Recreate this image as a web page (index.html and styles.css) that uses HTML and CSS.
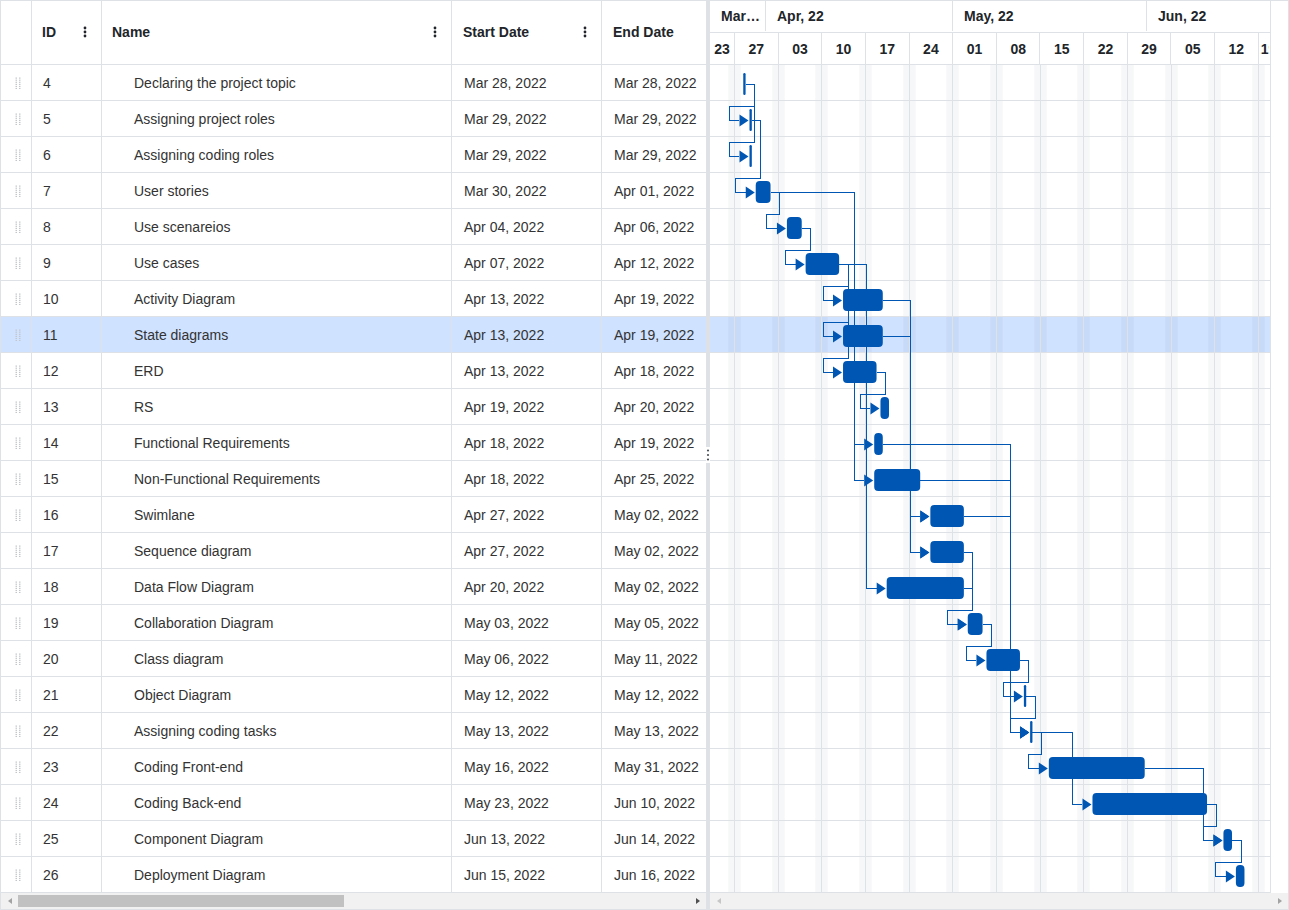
FILE: index.html
```html
<!DOCTYPE html>
<html lang="en">
<head>
<meta charset="utf-8">
<title>Project schedule – Gantt</title>
<link rel="stylesheet" href="styles.css">
</head>
<body>
<svg class="defs" width="0" height="0" aria-hidden="true">
  <symbol id="grip" viewBox="0 0 6 12">
    <rect x="0.5" y="0.5" width="1.5" height="1.2"/><rect x="4" y="0.5" width="1.5" height="1.2"/>
    <rect x="0.5" y="2.6" width="1.5" height="1.2"/><rect x="4" y="2.6" width="1.5" height="1.2"/>
    <rect x="0.5" y="4.7" width="1.5" height="1.2"/><rect x="4" y="4.7" width="1.5" height="1.2"/>
    <rect x="0.5" y="6.8" width="1.5" height="1.2"/><rect x="4" y="6.8" width="1.5" height="1.2"/>
    <rect x="0.5" y="8.9" width="1.5" height="1.2"/><rect x="4" y="8.9" width="1.5" height="1.2"/>
    <rect x="0.5" y="11" width="1.5" height="1"/><rect x="4" y="11" width="1.5" height="1"/>
  </symbol>
  <symbol id="kebab" viewBox="0 0 4 12">
    <circle cx="2" cy="2" r="1.4"/><circle cx="2" cy="6" r="1.4"/><circle cx="2" cy="10" r="1.4"/>
  </symbol>
</svg>

<div class="gantt">
  <section class="grid-pane">
    <div class="grid-header">
      <div class="hcell c-drag"></div>
      <div class="hcell c-id"><span>ID</span><svg class="kebab" width="4" height="12"><use href="#kebab"/></svg></div>
      <div class="hcell c-name"><span>Name</span><svg class="kebab" width="4" height="12"><use href="#kebab"/></svg></div>
      <div class="hcell c-start"><span>Start Date</span><svg class="kebab" width="4" height="12"><use href="#kebab"/></svg></div>
      <div class="hcell c-end"><span>End Date</span></div>
    </div>
    <div class="grid-body">
      <div class="row"><div class="cell c-drag"><svg class="grip" width="6" height="12"><use href="#grip"/></svg></div><div class="cell c-id">4</div><div class="cell c-name">Declaring the project topic</div><div class="cell c-start">Mar 28, 2022</div><div class="cell c-end">Mar 28, 2022</div></div>
      <div class="row"><div class="cell c-drag"><svg class="grip" width="6" height="12"><use href="#grip"/></svg></div><div class="cell c-id">5</div><div class="cell c-name">Assigning project roles</div><div class="cell c-start">Mar 29, 2022</div><div class="cell c-end">Mar 29, 2022</div></div>
      <div class="row"><div class="cell c-drag"><svg class="grip" width="6" height="12"><use href="#grip"/></svg></div><div class="cell c-id">6</div><div class="cell c-name">Assigning coding roles</div><div class="cell c-start">Mar 29, 2022</div><div class="cell c-end">Mar 29, 2022</div></div>
      <div class="row"><div class="cell c-drag"><svg class="grip" width="6" height="12"><use href="#grip"/></svg></div><div class="cell c-id">7</div><div class="cell c-name">User stories</div><div class="cell c-start">Mar 30, 2022</div><div class="cell c-end">Apr 01, 2022</div></div>
      <div class="row"><div class="cell c-drag"><svg class="grip" width="6" height="12"><use href="#grip"/></svg></div><div class="cell c-id">8</div><div class="cell c-name">Use scenareios</div><div class="cell c-start">Apr 04, 2022</div><div class="cell c-end">Apr 06, 2022</div></div>
      <div class="row"><div class="cell c-drag"><svg class="grip" width="6" height="12"><use href="#grip"/></svg></div><div class="cell c-id">9</div><div class="cell c-name">Use cases</div><div class="cell c-start">Apr 07, 2022</div><div class="cell c-end">Apr 12, 2022</div></div>
      <div class="row"><div class="cell c-drag"><svg class="grip" width="6" height="12"><use href="#grip"/></svg></div><div class="cell c-id">10</div><div class="cell c-name">Activity Diagram</div><div class="cell c-start">Apr 13, 2022</div><div class="cell c-end">Apr 19, 2022</div></div>
      <div class="row selected"><div class="cell c-drag"><svg class="grip" width="6" height="12"><use href="#grip"/></svg></div><div class="cell c-id">11</div><div class="cell c-name">State diagrams</div><div class="cell c-start">Apr 13, 2022</div><div class="cell c-end">Apr 19, 2022</div></div>
      <div class="row"><div class="cell c-drag"><svg class="grip" width="6" height="12"><use href="#grip"/></svg></div><div class="cell c-id">12</div><div class="cell c-name">ERD</div><div class="cell c-start">Apr 13, 2022</div><div class="cell c-end">Apr 18, 2022</div></div>
      <div class="row"><div class="cell c-drag"><svg class="grip" width="6" height="12"><use href="#grip"/></svg></div><div class="cell c-id">13</div><div class="cell c-name">RS</div><div class="cell c-start">Apr 19, 2022</div><div class="cell c-end">Apr 20, 2022</div></div>
      <div class="row"><div class="cell c-drag"><svg class="grip" width="6" height="12"><use href="#grip"/></svg></div><div class="cell c-id">14</div><div class="cell c-name">Functional Requirements</div><div class="cell c-start">Apr 18, 2022</div><div class="cell c-end">Apr 19, 2022</div></div>
      <div class="row"><div class="cell c-drag"><svg class="grip" width="6" height="12"><use href="#grip"/></svg></div><div class="cell c-id">15</div><div class="cell c-name">Non-Functional Requirements</div><div class="cell c-start">Apr 18, 2022</div><div class="cell c-end">Apr 25, 2022</div></div>
      <div class="row"><div class="cell c-drag"><svg class="grip" width="6" height="12"><use href="#grip"/></svg></div><div class="cell c-id">16</div><div class="cell c-name">Swimlane</div><div class="cell c-start">Apr 27, 2022</div><div class="cell c-end">May 02, 2022</div></div>
      <div class="row"><div class="cell c-drag"><svg class="grip" width="6" height="12"><use href="#grip"/></svg></div><div class="cell c-id">17</div><div class="cell c-name">Sequence diagram</div><div class="cell c-start">Apr 27, 2022</div><div class="cell c-end">May 02, 2022</div></div>
      <div class="row"><div class="cell c-drag"><svg class="grip" width="6" height="12"><use href="#grip"/></svg></div><div class="cell c-id">18</div><div class="cell c-name">Data Flow Diagram</div><div class="cell c-start">Apr 20, 2022</div><div class="cell c-end">May 02, 2022</div></div>
      <div class="row"><div class="cell c-drag"><svg class="grip" width="6" height="12"><use href="#grip"/></svg></div><div class="cell c-id">19</div><div class="cell c-name">Collaboration Diagram</div><div class="cell c-start">May 03, 2022</div><div class="cell c-end">May 05, 2022</div></div>
      <div class="row"><div class="cell c-drag"><svg class="grip" width="6" height="12"><use href="#grip"/></svg></div><div class="cell c-id">20</div><div class="cell c-name">Class diagram</div><div class="cell c-start">May 06, 2022</div><div class="cell c-end">May 11, 2022</div></div>
      <div class="row"><div class="cell c-drag"><svg class="grip" width="6" height="12"><use href="#grip"/></svg></div><div class="cell c-id">21</div><div class="cell c-name">Object Diagram</div><div class="cell c-start">May 12, 2022</div><div class="cell c-end">May 12, 2022</div></div>
      <div class="row"><div class="cell c-drag"><svg class="grip" width="6" height="12"><use href="#grip"/></svg></div><div class="cell c-id">22</div><div class="cell c-name">Assigning coding tasks</div><div class="cell c-start">May 13, 2022</div><div class="cell c-end">May 13, 2022</div></div>
      <div class="row"><div class="cell c-drag"><svg class="grip" width="6" height="12"><use href="#grip"/></svg></div><div class="cell c-id">23</div><div class="cell c-name">Coding Front-end</div><div class="cell c-start">May 16, 2022</div><div class="cell c-end">May 31, 2022</div></div>
      <div class="row"><div class="cell c-drag"><svg class="grip" width="6" height="12"><use href="#grip"/></svg></div><div class="cell c-id">24</div><div class="cell c-name">Coding Back-end</div><div class="cell c-start">May 23, 2022</div><div class="cell c-end">Jun 10, 2022</div></div>
      <div class="row"><div class="cell c-drag"><svg class="grip" width="6" height="12"><use href="#grip"/></svg></div><div class="cell c-id">25</div><div class="cell c-name">Component Diagram</div><div class="cell c-start">Jun 13, 2022</div><div class="cell c-end">Jun 14, 2022</div></div>
      <div class="row"><div class="cell c-drag"><svg class="grip" width="6" height="12"><use href="#grip"/></svg></div><div class="cell c-id">26</div><div class="cell c-name">Deployment Diagram</div><div class="cell c-start">Jun 15, 2022</div><div class="cell c-end">Jun 16, 2022</div></div>
    </div>
    <div class="hscroll">
      <div class="sb-btn"><span class="tri-left"></span></div>
      <div class="sb-track"><div class="sb-thumb"></div></div>
      <div class="sb-btn"><span class="tri-right dark"></span></div>
    </div>
  </section>

  <div class="splitter">
    <div class="split-handle"><svg width="4" height="16" viewBox="0 0 4 16"><circle cx="2" cy="3.5" r="1.1"/><circle cx="2" cy="8" r="1.1"/><circle cx="2" cy="12.5" r="1.1"/></svg></div>
  </div>

  <section class="chart-pane">
    <div class="timeline">
      <div class="tiers">
        <div class="tier top">
          <div class="tcell w-mar">Mar…</div>
          <div class="tcell w-apr">Apr, 22</div>
          <div class="tcell w-may">May, 22</div>
          <div class="tcell last">Jun, 22</div>
        </div>
        <div class="tier">
          <div class="wcell first">23</div>
          <div class="wcell">27</div>
          <div class="wcell">03</div>
          <div class="wcell">10</div>
          <div class="wcell">17</div>
          <div class="wcell">24</div>
          <div class="wcell">01</div>
          <div class="wcell">08</div>
          <div class="wcell">15</div>
          <div class="wcell">22</div>
          <div class="wcell">29</div>
          <div class="wcell">05</div>
          <div class="wcell">12</div>
          <div class="wcell last"><span class="clip">19</span></div>
        </div>
      </div>
      <div class="gutter"></div>
    </div>
    <div class="chart-body">
      <div class="chart-canvas"><svg id="chart" class="chart-svg" width="560" height="828"></svg></div>
      <div class="gutter"></div>
    </div>
    <div class="hscroll">
      <div class="sb-btn"><span class="tri-left light"></span></div>
      <div class="sb-track"></div>
      <div class="sb-btn"><span class="tri-right"></span></div>
    </div>
  </section>
</div>
<script src="script.js"></script>
</body>
</html>
```

FILE: styles.css
```css
* { box-sizing: border-box; }
html, body { margin: 0; padding: 0; background: #fff; }
body {
  font-family: "Liberation Sans", Arial, sans-serif;
  font-size: 14px;
  color: #333;
}
.defs { display: block; width: 0; height: 0; overflow: hidden; }

.gantt {
  display: flex;
  width: 1289px;
  height: 910px;
  border: 1px solid #dee2e6;
  overflow: hidden;
}

/* ---------- left grid ---------- */
.grid-pane {
  width: 705px;
  flex: none;
  display: flex;
  flex-direction: column;
  overflow: hidden;
}
.grid-header {
  height: 64px;
  flex: none;
  display: flex;
  border-bottom: 1px solid #dee2e6;
}
.hcell {
  flex: none;
  display: flex;
  align-items: center;
  justify-content: space-between;
  padding: 0 14px 1px 10px;
  border-right: 1px solid #dee2e6;
  font-weight: 700;
  color: #212529;
  white-space: nowrap;
}
.hcell.c-start, .hcell.c-end { padding-left: 11px; }
.kebab { display: block; fill: #212529; }
.c-drag { width: 31px; }
.c-id { width: 70px; }
.c-name { width: 350px; }
.c-start { width: 150px; }
.c-end { width: 150px; border-right: none; }
.hcell.c-drag { padding: 0; }

.grid-body { height: 828px; flex: none; }
.row {
  display: flex;
  height: 36px;
  border-bottom: 1px solid #dee2e6;
}
.row.selected { background: #cfe2ff; }
.cell {
  flex: none;
  display: flex;
  align-items: center;
  padding: 1px 12px 0;
  border-right: 1px solid #dee2e6;
  white-space: nowrap;
  overflow: hidden;
}
.cell.c-id { padding-left: 11px; }
.cell.c-name { padding-left: 32px; }
.cell.c-drag { padding: 1px 0 0 14px; }
.cell.c-end { border-right: none; }
.grip { display: block; fill: #c3c7cc; }

/* ---------- scrollbars ---------- */
.hscroll {
  height: 16px;
  flex: none;
  display: flex;
  background: #f1f1f1;
}
.sb-btn {
  width: 17px;
  flex: none;
  display: flex;
  align-items: center;
  justify-content: center;
}
.sb-track { flex: 1; padding: 2px 0; }
.sb-thumb { width: 326px; height: 100%; background: #c1c1c1; }
.tri-left, .tri-right {
  width: 0;
  height: 0;
  border-top: 3.5px solid transparent;
  border-bottom: 3.5px solid transparent;
}
.tri-left { border-right: 4px solid #a3a3a3; }
.tri-right { border-left: 4px solid #a3a3a3; }
.tri-left.light { border-right-color: #c6c6c6; }
.tri-right.dark { border-left-color: #505050; }

/* ---------- splitter ---------- */
.splitter {
  width: 4px;
  flex: none;
  background: #dee2e6;
  display: flex;
  align-items: center;
  justify-content: center;
}
.split-handle { width: 4px; height: 16px; background: #fff; }
.split-handle svg { display: block; fill: #495057; }

/* ---------- chart ---------- */
.chart-pane {
  flex: 1;
  min-width: 0;
  display: flex;
  flex-direction: column;
}
.timeline { height: 64px; flex: none; display: flex; }
.tiers {
  width: 561px;
  flex: none;
  display: flex;
  flex-direction: column;
  border-right: 1px solid #dee2e6;
  overflow: hidden;
}
.tier {
  height: 32px;
  display: flex;
  border-bottom: 1px solid #dee2e6;
  font-weight: 700;
  color: #212529;
}
.tier.top { padding-bottom: 1px; }
.tcell {
  flex: none;
  display: flex;
  align-items: center;
  padding-left: 11px;
  border-right: 1px solid #dee2e6;
  white-space: nowrap;
  overflow: hidden;
}
.w-mar { width: 56px; }
.w-apr { width: 187px; }
.w-may { width: 194px; }
.tcell.last { flex: 1; border-right: none; }
.wcell {
  flex: none;
  width: 43.65px;
  display: flex;
  align-items: center;
  justify-content: center;
  border-right: 1px solid #dee2e6;
  white-space: nowrap;
  overflow: hidden;
}
.wcell.first { width: 25px; }
.wcell.last { flex: 1; width: auto; justify-content: flex-start; padding-left: 2px; border-right: none; }
.wcell .clip { display: block; width: 8px; overflow: hidden; }
.gutter { width: 17px; flex: none; }

.chart-body { height: 828px; flex: none; display: flex; }
.chart-canvas { width: 561px; flex: none; border-right: 1px solid #dee2e6; }
.chart-svg { display: block; }
.chart-svg .sel { fill: #cfe2ff; }
.chart-svg .wkend { fill: rgba(0, 20, 60, 0.035); }
.chart-svg .gline { stroke: #dee2e6; stroke-width: 1; fill: none; shape-rendering: crispEdges; }
.chart-svg .conn { stroke: #0056b3; stroke-width: 1; fill: none; shape-rendering: crispEdges; }
.chart-svg .arrow { fill: #0056b3; }
.chart-svg .bar { fill: #0056b3; }
```

FILE: script.js
```js
(function () {
  var D = 6.236;      /* px per day, Mar 23 2022 = day 0 */
  var ROW = 36;
  var W = 560;
  /* [id, startDay, endDay] */
  var tasks = [
    [4, 5, 5], [5, 6, 6], [6, 6, 6], [7, 7, 9], [8, 12, 14], [9, 15, 20],
    [10, 21, 27], [11, 21, 27], [12, 21, 26], [13, 27, 28], [14, 26, 27],
    [15, 26, 33], [16, 35, 40], [17, 35, 40], [18, 28, 40], [19, 41, 43],
    [20, 44, 49], [21, 50, 50], [22, 51, 51], [23, 54, 69], [24, 61, 79],
    [25, 82, 83], [26, 84, 85]
  ];
  var deps = [
    [4, 5], [4, 6], [5, 7], [7, 8], [7, 14], [7, 15], [8, 9], [9, 10], [9, 11],
    [9, 12], [9, 18], [10, 16], [10, 17], [11, 16], [11, 17], [12, 13],
    [14, 22], [15, 22], [16, 22], [17, 19], [18, 19], [19, 20], [20, 21],
    [21, 22], [22, 23], [22, 24], [23, 25], [24, 25], [25, 26]
  ];
  var selected = 7;
  var H = tasks.length * ROW;
  var svg = document.getElementById('chart');
  if (!svg) return;
  svg.setAttribute('width', W);
  svg.setAttribute('height', H);
  svg.setAttribute('viewBox', '0 0 ' + W + ' ' + H);

  var idx = {};
  tasks.forEach(function (t, i) { idx[t[0]] = i; });
  function sx(t) { return (t[1] + 8 / 24) * D; }
  function ex(t) { return (t[2] + 17 / 24) * D; }
  function px(v) { return Math.floor(v) + 0.5; }
  function f(v) { return Math.round(v * 100) / 100; }

  var s = '';
  s += '<rect class="sel" x="0" y="' + (selected * ROW) + '" width="' + W + '" height="' + (ROW - 1) + '"/>';

  var weeks = [];
  for (var k = 0; k < 13; k++) weeks.push(Math.round(24 + 43.652 * k) + 0.5);
  weeks.forEach(function (w) {
    s += '<rect class="wkend" x="' + f(w - 6.236) + '" y="0" width="12.47" height="' + H + '"/>';
  });
  for (var r = 1; r <= tasks.length; r++) {
    s += '<path class="gline" d="M0 ' + (r * ROW - 0.5) + 'H' + W + '"/>';
  }
  weeks.forEach(function (w) {
    s += '<path class="gline" d="M' + w + ' 0V' + H + '"/>';
  });

  var arrows = '';
  deps.forEach(function (dp) {
    var ia = idx[dp[0]], ib = idx[dp[1]];
    var A = tasks[ia], B = tasks[ib];
    var x1 = f(ex(A));
    var y1 = ia * ROW + 19.5;
    var xs = sx(B);
    var y2 = ib * ROW + 19.5;
    var tip = f(xs - 1), base = f(xs - 10);
    var vx = px(xs - 20);
    var d;
    if (xs - ex(A) < 30) {
      var jx = px(ex(A) + 9);
      var jy = ib * ROW + 5.5;
      d = 'M' + x1 + ' ' + y1 + 'H' + jx + 'V' + jy + 'H' + vx + 'V' + y2 + 'H' + base;
    } else {
      d = 'M' + x1 + ' ' + y1 + 'H' + vx + 'V' + y2 + 'H' + base;
    }
    s += '<path class="conn" d="' + d + '"/>';
    arrows += '<polygon class="arrow" points="' + base + ',' + (y2 - 6) + ' ' + tip + ',' + y2 + ' ' + base + ',' + (y2 + 6) + '"/>';
  });
  s += arrows;

  tasks.forEach(function (t, i) {
    var x = sx(t), w = ex(t) - x;
    var rx = Math.min(4, w / 2);
    s += '<rect class="bar" x="' + f(x) + '" y="' + (i * ROW + 8) + '" width="' + f(w) + '" height="22" rx="' + f(rx) + '"/>';
  });

  svg.innerHTML = s;
})();
```
